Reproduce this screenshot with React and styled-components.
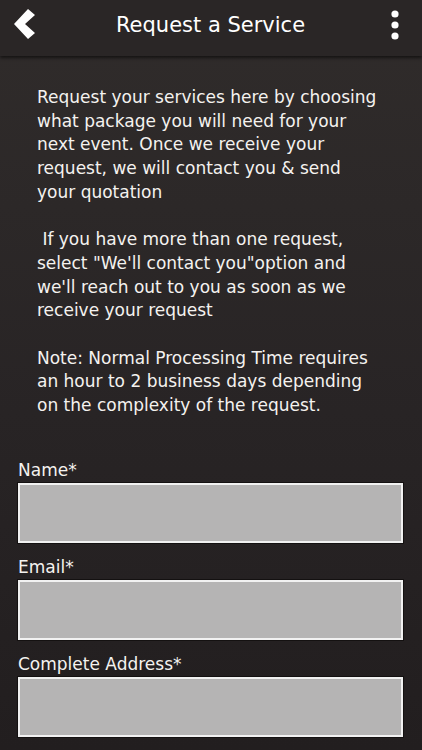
import styled, { createGlobalStyle } from 'styled-components';

const GlobalStyle = createGlobalStyle`
  html, body {
    margin: 0;
    padding: 0;
    background: #231f20;
  }
  body {
    font-family: "DejaVu Sans", Verdana, sans-serif;
  }
`;

const Screen = styled.div`
  width: 422px;
  height: 750px;
  overflow: hidden;
  background: linear-gradient(180deg, #302c2b 0%, #282425 55%, #221e1f 100%);
  color: #f4f2ef;
  display: flex;
  flex-direction: column;
`;

const Header = styled.header`
  height: 56px;
  flex-shrink: 0;
  background: #2a2626;
  box-shadow: 0 2px 3px rgba(0, 0, 0, 0.55);
  display: flex;
  align-items: center;
  justify-content: space-between;
  padding: 0 23px 0 12px;
  position: relative;
  z-index: 1;
`;

const IconButton = styled.button`
  background: none;
  border: none;
  padding: 0;
  display: flex;
  align-items: center;
  justify-content: center;
  cursor: pointer;
  margin-top: ${p => p.$offset || 0}px;
`;

const Title = styled.h1`
  margin: 0 6px 6px 0;
  font-size: 21px;
  font-weight: normal;
  color: #ffffff;
`;

const Body = styled.main`
  flex: 1;
  display: flex;
  flex-direction: column;
`;

const Intro = styled.p`
  margin: 30px 0 0 0;
  padding: 0 10px 0 37px;
  font-size: 17px;
  line-height: 23.7px;
  white-space: pre;
`;

const Form = styled.form`
  margin-top: 42px;
  padding: 0 19px 0 18px;
  display: flex;
  flex-direction: column;
  gap: 14px;
`;

const Field = styled.label`
  display: flex;
  flex-direction: column;
  gap: 3px;
`;

const Label = styled.span`
  font-size: 17px;
  line-height: 20px;
  color: #f4f2ef;
`;

const Input = styled.input`
  box-sizing: border-box;
  width: 100%;
  height: 60px;
  background: #b5b4b4;
  border: 2px solid #f1f1f1;
  box-shadow: 0 0 0 1px #141111;
  margin: 0;
`;

const fields = ['Name*', 'Email*', 'Complete Address*'];

const introText = `Request your services here by choosing
what package you will need for your
next event. Once we receive your
request, we will contact you & send
your quotation

 If you have more than one request,
select "We'll contact you"option and
we'll reach out to you as soon as we
receive your request

Note: Normal Processing Time requires
an hour to 2 business days depending
on the complexity of the request.`;

export default function App() {
  return (
    <>
      <GlobalStyle />
      <Screen>
        <Header>
          <IconButton aria-label="Back" $offset={-6}>
            <svg width="24" height="32" viewBox="0 0 24 32">
              <polygon points="16,0 23,6 13,15 23,24 16,30 2,15" fill="#fff" />
            </svg>
          </IconButton>
          <Title>Request a Service</Title>
          <IconButton aria-label="More" $offset={-6}>
            <svg width="8" height="30" viewBox="0 0 8 30">
              <circle cx="4" cy="4" r="3.6" fill="#fff" />
              <circle cx="4" cy="15" r="3.6" fill="#fff" />
              <circle cx="4" cy="26" r="3.6" fill="#fff" />
            </svg>
          </IconButton>
        </Header>
        <Body>
          <Intro>{introText}</Intro>
          <Form>
            {fields.map(f => (
              <Field key={f}>
                <Label>{f}</Label>
                <Input type="text" />
              </Field>
            ))}
          </Form>
        </Body>
      </Screen>
    </>
  );
}
